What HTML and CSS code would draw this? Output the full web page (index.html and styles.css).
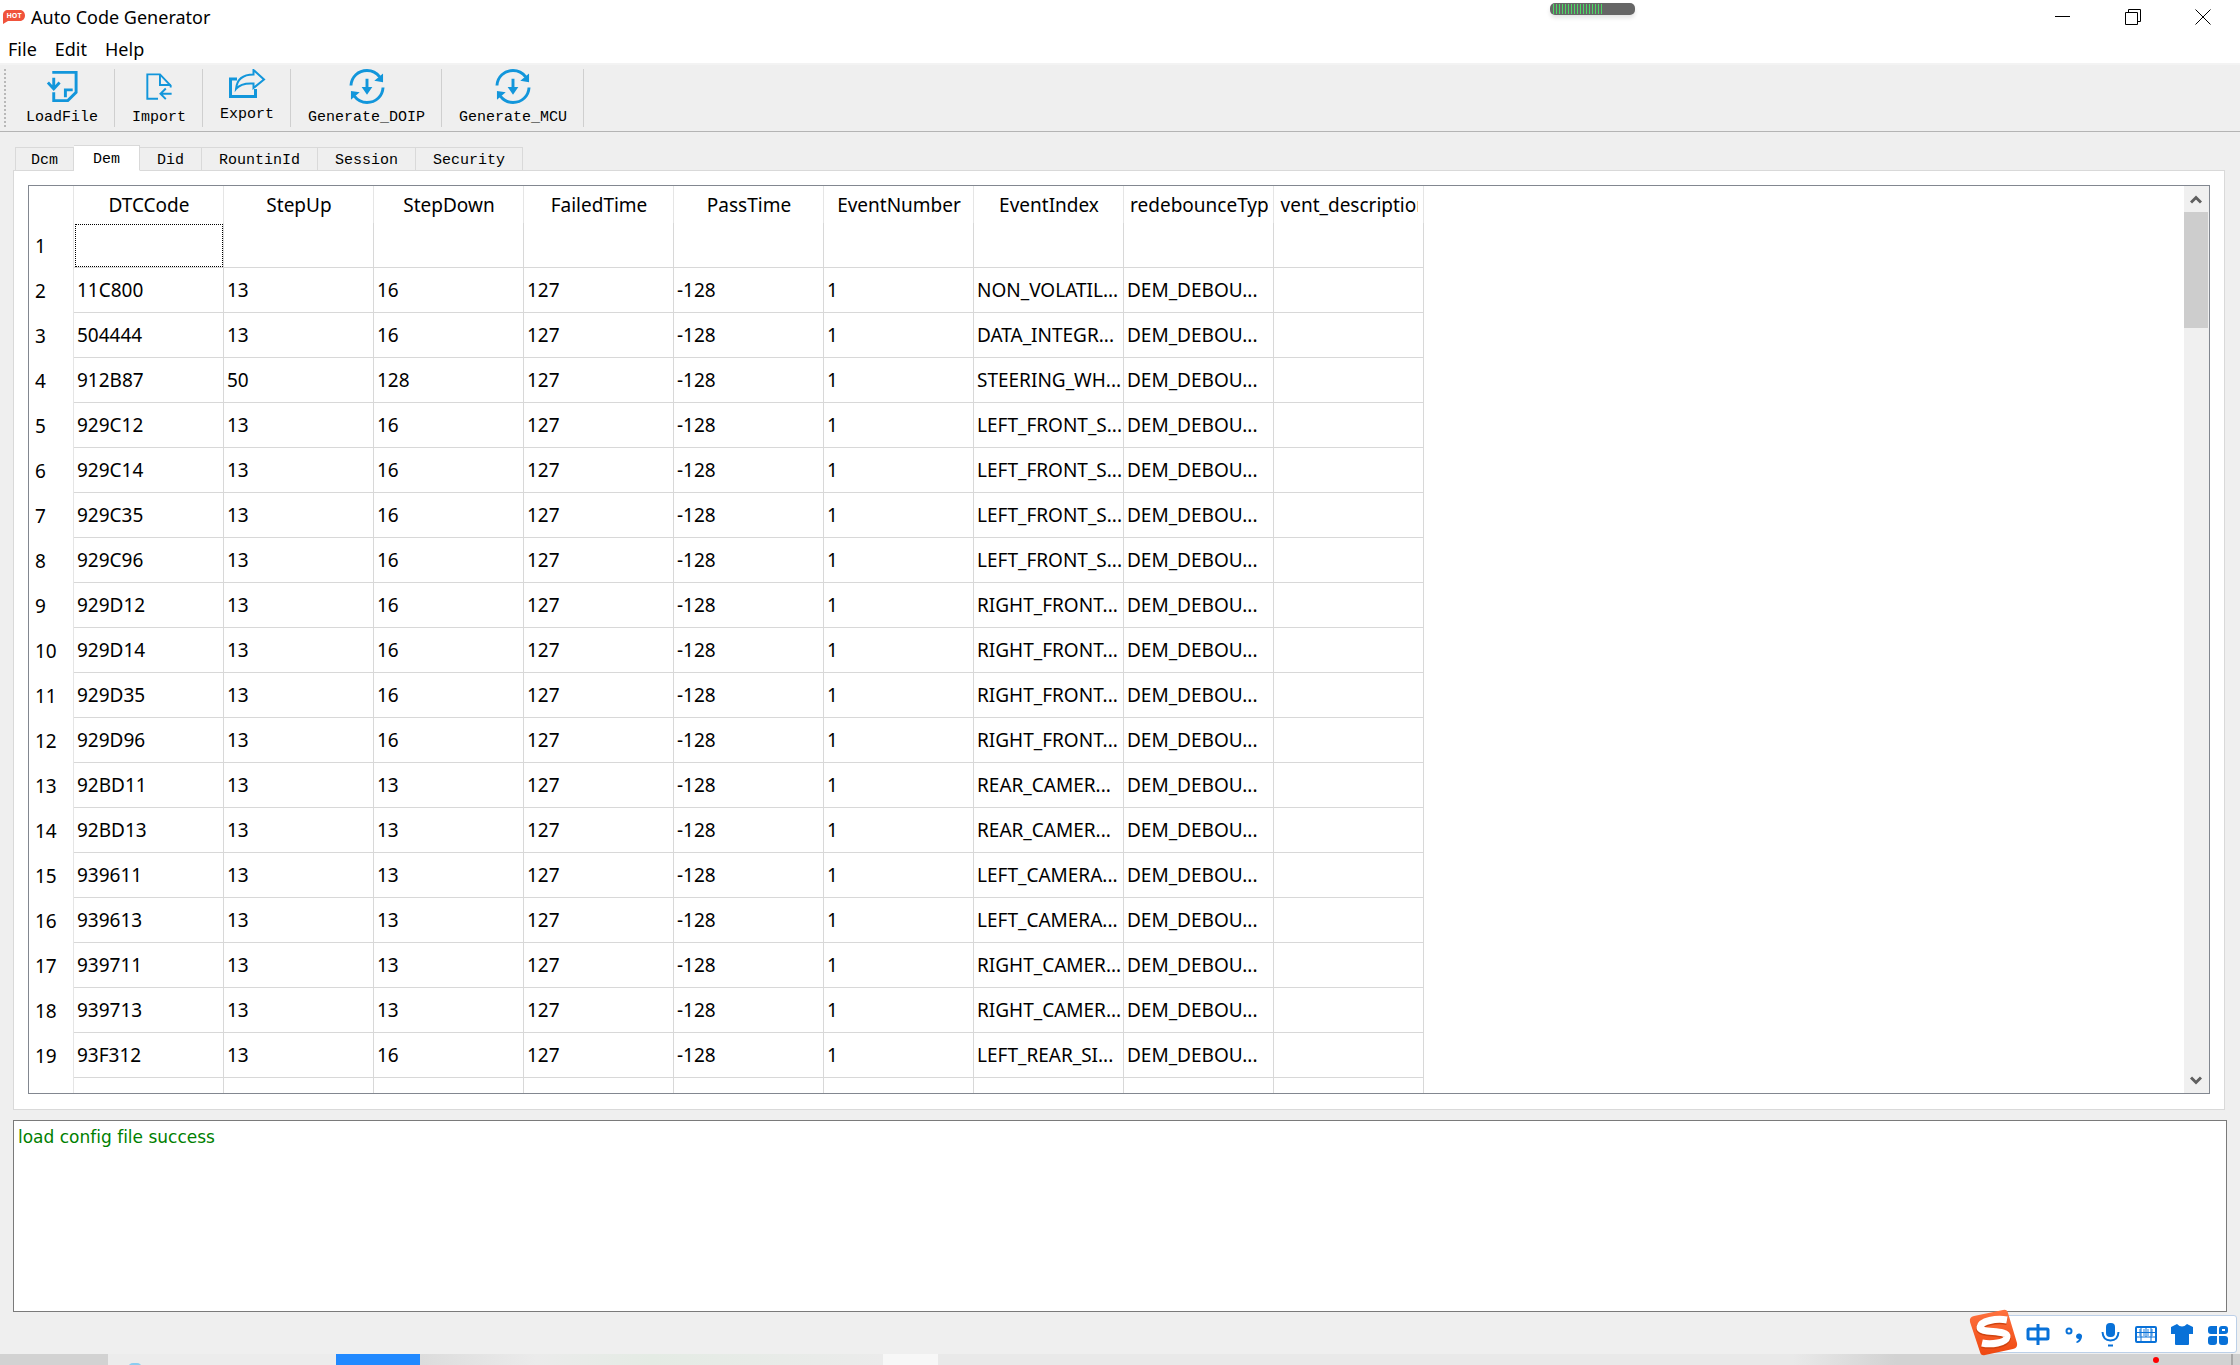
FILE: index.html
```html
<!DOCTYPE html>
<html lang="en">
<head>
<meta charset="utf-8">
<title>Auto Code Generator</title>
<link rel="stylesheet" href="styles.css">
</head>
<body>
<svg class="defs" width="0" height="0" aria-hidden="true">
  <symbol id="sync" viewBox="0 0 36 36">
    <path d="M1.500 17C2 8 9 1.500 18 1.500C24 1.500 28 4 31 8M34.500 19C34 28 27 34.500 18 34.500C12 34.500 8 32 5 28" fill="none" stroke="#1296db" stroke-width="3"/>
    <path d="M34.500 4.500V13.500L25.500 12ZM1.500 31.500V22.500L10.500 24ZM12.500 18.500H23.500L18 26.500ZM16.500 10h3v10h-3Z" fill="#1296db"/>
  </symbol>
</svg>

<header class="titlebar">
  <svg class="app-icon" width="22" height="16" viewBox="0 0 22 16"><path d="M5 1H17C20 1 22 3.500 22 6.500S20 12 17 12H5L0 15V6C0 3 2 1 5 1Z" fill="#f0533c"/><text x="11" y="9" text-anchor="middle" class="hot">HOT</text></svg>
  <h1 class="title">Auto Code Generator</h1>
  <div class="window-buttons">
    <button class="window-button" aria-label="Minimize"><svg width="16" height="16" viewBox="0 0 16 16"><path d="M0 7.500H15" stroke="#000"/></svg></button>
    <button class="window-button" aria-label="Restore"><svg width="16" height="16" viewBox="0 0 16 16"><path d="M.5 3.500H12.500V15.500H.5ZM3.500 3.500V.5H15.500V12.500H12.500" fill="none" stroke="#000"/></svg></button>
    <button class="window-button" aria-label="Close"><svg width="16" height="16" viewBox="0 0 16 16"><path d="M.5 .5L15.500 15.500M15.500 .5L.5 15.500" stroke="#000"/></svg></button>
  </div>
  <div class="meter"><div class="meter-bars"></div></div>
</header>

<nav class="menubar">
  <button class="menu">File</button>
  <button class="menu">Edit</button>
  <button class="menu">Help</button>
</nav>

<div class="toolbar" role="toolbar">
  <div class="grip"></div>
  <button class="tool tool-first">
    <svg width="36" height="36" viewBox="0 0 36 36"><g fill="none" stroke="#1296db" stroke-width="3"><path d="M8 3.500H32.500V24L24 32.500H9.500V24"/><path d="M21.500 29V21.500H29" /><path d="M9.500 9V20M3.500 14L9.500 20.500L15.500 14"/></g></svg>
    <span>LoadFile</span>
  </button>
  <button class="tool">
    <svg width="36" height="36" viewBox="0 0 36 36"><g fill="none" stroke="#1296db" stroke-width="2"><path d="M17 30.500H6V5.500H19L30 17V19"/><path d="M19 5.500V16.500H30"/><path d="M31 25.500H20M25 20L19.500 25.500L25 31"/></g></svg>
    <span>Import</span>
  </button>
  <button class="tool">
    <svg width="38" height="32" viewBox="0 4 38 32"><g fill="none" stroke="#1296db" stroke-width="2"><path d="M9 14H2.500V31.500H27.500V24" stroke-width="3"/><path d="M8 24C9 13 16 9.500 25.500 9.500V5L36 14.500L25.500 23V18.500C18 18 12 19 8 24Z"/></g></svg>
    <span>Export</span>
  </button>
  <button class="tool">
    <svg width="36" height="36"><use href="#sync"/></svg>
    <span>Generate_DOIP</span>
  </button>
  <button class="tool">
    <svg width="36" height="36"><use href="#sync"/></svg>
    <span>Generate_MCU</span>
  </button>
</div>

<main class="workspace">
  <div class="tabs" role="tablist">
    <button class="tab" role="tab">Dcm</button>
    <button class="tab tab-active" role="tab" aria-selected="true">Dem</button>
    <button class="tab" role="tab">Did</button>
    <button class="tab" role="tab">RountinId</button>
    <button class="tab" role="tab">Session</button>
    <button class="tab" role="tab">Security</button>
  </div>
  <section class="pane" role="tabpanel">
    <div class="grid-frame">
      <div class="grid-view">
        <table class="grid">
          <thead>
            <tr><th class="row-head"></th><th><div>DTCCode</div></th><th><div>StepUp</div></th><th><div>StepDown</div></th><th><div>FailedTime</div></th><th><div>PassTime</div></th><th><div>EventNumber</div></th><th><div>EventIndex</div></th><th><div>PredebounceType</div></th><th><div>Event_description</div></th></tr>
          </thead>
          <tbody>
            <tr><th>1</th><td class="focused"></td><td></td><td></td><td></td><td></td><td></td><td></td><td></td><td></td></tr>
            <tr><th>2</th><td>11C800</td><td>13</td><td>16</td><td>127</td><td>-128</td><td>1</td><td>NON_VOLATIL...</td><td>DEM_DEBOU...</td><td></td></tr>
            <tr><th>3</th><td>504444</td><td>13</td><td>16</td><td>127</td><td>-128</td><td>1</td><td>DATA_INTEGR...</td><td>DEM_DEBOU...</td><td></td></tr>
            <tr><th>4</th><td>912B87</td><td>50</td><td>128</td><td>127</td><td>-128</td><td>1</td><td>STEERING_WH...</td><td>DEM_DEBOU...</td><td></td></tr>
            <tr><th>5</th><td>929C12</td><td>13</td><td>16</td><td>127</td><td>-128</td><td>1</td><td>LEFT_FRONT_S...</td><td>DEM_DEBOU...</td><td></td></tr>
            <tr><th>6</th><td>929C14</td><td>13</td><td>16</td><td>127</td><td>-128</td><td>1</td><td>LEFT_FRONT_S...</td><td>DEM_DEBOU...</td><td></td></tr>
            <tr><th>7</th><td>929C35</td><td>13</td><td>16</td><td>127</td><td>-128</td><td>1</td><td>LEFT_FRONT_S...</td><td>DEM_DEBOU...</td><td></td></tr>
            <tr><th>8</th><td>929C96</td><td>13</td><td>16</td><td>127</td><td>-128</td><td>1</td><td>LEFT_FRONT_S...</td><td>DEM_DEBOU...</td><td></td></tr>
            <tr><th>9</th><td>929D12</td><td>13</td><td>16</td><td>127</td><td>-128</td><td>1</td><td>RIGHT_FRONT...</td><td>DEM_DEBOU...</td><td></td></tr>
            <tr><th>10</th><td>929D14</td><td>13</td><td>16</td><td>127</td><td>-128</td><td>1</td><td>RIGHT_FRONT...</td><td>DEM_DEBOU...</td><td></td></tr>
            <tr><th>11</th><td>929D35</td><td>13</td><td>16</td><td>127</td><td>-128</td><td>1</td><td>RIGHT_FRONT...</td><td>DEM_DEBOU...</td><td></td></tr>
            <tr><th>12</th><td>929D96</td><td>13</td><td>16</td><td>127</td><td>-128</td><td>1</td><td>RIGHT_FRONT...</td><td>DEM_DEBOU...</td><td></td></tr>
            <tr><th>13</th><td>92BD11</td><td>13</td><td>13</td><td>127</td><td>-128</td><td>1</td><td>REAR_CAMER...</td><td>DEM_DEBOU...</td><td></td></tr>
            <tr><th>14</th><td>92BD13</td><td>13</td><td>13</td><td>127</td><td>-128</td><td>1</td><td>REAR_CAMER...</td><td>DEM_DEBOU...</td><td></td></tr>
            <tr><th>15</th><td>939611</td><td>13</td><td>13</td><td>127</td><td>-128</td><td>1</td><td>LEFT_CAMERA...</td><td>DEM_DEBOU...</td><td></td></tr>
            <tr><th>16</th><td>939613</td><td>13</td><td>13</td><td>127</td><td>-128</td><td>1</td><td>LEFT_CAMERA...</td><td>DEM_DEBOU...</td><td></td></tr>
            <tr><th>17</th><td>939711</td><td>13</td><td>13</td><td>127</td><td>-128</td><td>1</td><td>RIGHT_CAMER...</td><td>DEM_DEBOU...</td><td></td></tr>
            <tr><th>18</th><td>939713</td><td>13</td><td>13</td><td>127</td><td>-128</td><td>1</td><td>RIGHT_CAMER...</td><td>DEM_DEBOU...</td><td></td></tr>
            <tr><th>19</th><td>93F312</td><td>13</td><td>16</td><td>127</td><td>-128</td><td>1</td><td>LEFT_REAR_SI...</td><td>DEM_DEBOU...</td><td></td></tr>
            <tr><th></th><td></td><td></td><td></td><td></td><td></td><td></td><td></td><td></td><td></td></tr>
          </tbody>
        </table>
      </div>
      <div class="scrollbar">
        <button class="scroll-arrow" aria-label="Scroll up"><svg width="12" height="10" viewBox="0 0 12 10"><path d="M1 8.500L6 3.500L11 8.500" fill="none" stroke="#606060" stroke-width="3"/></svg></button>
        <div class="scroll-thumb"></div>
        <button class="scroll-arrow scroll-down" aria-label="Scroll down"><svg width="12" height="10" viewBox="0 0 12 10"><path d="M1 2.500L6 7.500L11 2.500" fill="none" stroke="#606060" stroke-width="3"/></svg></button>
      </div>
    </div>
  </section>
</main>

<textarea class="log" aria-label="Log" readonly>load config file success</textarea>

<footer class="taskbar">
  <div class="task task-start"></div>
  <div class="task task-search"><div class="search-icon"></div></div>
  <div class="task task-blue"></div>
  <div class="task task-apps"></div>
  <div class="task task-light"></div>
  <div class="task task-rest"></div>
  <div class="notice-dot"></div>
</footer>

<aside class="ime">
  <svg class="ime-logo" width="50" height="48" viewBox="0 0 50 48">
    <defs><linearGradient id="orange" x1="0" y1="0" x2="0" y2="1"><stop offset="0" stop-color="#ff7340"/><stop offset="1" stop-color="#ee4710"/></linearGradient></defs>
    <path d="M5 7L34 1Q38 0 39 4L48 34Q49 39 44 40L16 46Q12 47 11 43L1 13Q0 8 5 7Z" fill="url(#orange)"/>
    <path d="M38 12C27 10 12 13 11 19C10 26 39 21 38 29C37 35 22 37 13 35" fill="none" stroke="#d0430f" stroke-width="8"/>
    <path d="M38 11C27 9 12 12 11 18C10 25 39 20 38 28C37 34 22 36 13 34" fill="none" stroke="#fff" stroke-width="7"/>
  </svg>
  <button class="ime-button" aria-label="Chinese mode"><svg width="24" height="26" viewBox="0 0 24 26"><path d="M3 7H21Q22 7 22 8V16Q22 17 21 17H3Q2 17 2 16V8Q2 7 3 7ZM12 2V23" fill="none" stroke="#0871d8" stroke-width="3"/></svg></button>
  <button class="ime-button" aria-label="Punctuation"><svg width="24" height="26" viewBox="0 0 24 26"><circle cx="7" cy="9" r="2.500" fill="none" stroke="#0871d8" stroke-width="2"/><path d="M14 14A3 3 0 1 1 20 15Q19 20 15 21L14 20Q17 18 17 17Q14 17 14 14Z" fill="#0871d8"/></svg></button>
  <button class="ime-button" aria-label="Voice input"><svg width="24" height="26" viewBox="0 0 24 26"><rect x="8" y="1" width="9" height="14" rx="4" fill="#0871d8"/><path d="M4.500 10Q5 18.500 12.500 18.500T20.500 10M10 23.500H15" fill="none" stroke="#0871d8" stroke-width="2"/></svg></button>
  <button class="ime-button" aria-label="Keyboard"><svg width="24" height="26" viewBox="0 0 24 26"><rect x="2" y="5" width="20" height="15" rx="1" fill="none" stroke="#0871d8" stroke-width="2"/><path d="M5 8.500H20M5 12.500H20" stroke="#0871d8" stroke-width="3" stroke-dasharray="2 2" opacity=".45"/><path d="M3 10.500H21M3 15H21M7 5V20M12 5V15M17 5V20" stroke="#0871d8"/></svg></button>
  <button class="ime-button" aria-label="Skins"><svg width="24" height="26" viewBox="0 0 24 26"><path d="M7 2Q12 7 17 2L23 5V12H19V22Q19 23 18 23H6Q5 23 5 22V12H1V5Z" fill="#0871d8"/></svg></button>
  <button class="ime-button" aria-label="Toolbox"><svg width="24" height="26" viewBox="0 0 24 26"><path d="M5 4H11V12H5Q2 12 2 9V7Q2 4 5 4ZM5 14H11V20Q11 23 8 23H5Q2 23 2 20V17Q2 14 5 14ZM13 14H19Q22 14 22 17V20Q22 23 19 23H16Q13 23 13 20Z" fill="#0871d8"/><path d="M14.500 10.500V7Q14.500 5.500 16 5.500H19Q20.500 5.500 20.500 7V9Q20.500 10.500 19 10.500Z" fill="none" stroke="#0871d8" stroke-width="3"/></svg></button>
</aside>
</body>
</html>
```

FILE: styles.css
```css
* { box-sizing: border-box; }

body {
  margin: 0;
  height: 100vh;
  overflow: hidden;
  display: flex;
  flex-direction: column;
  background: #efefef;
  color: #000;
  font-family: "Noto Sans", "Open Sans", sans-serif;
  font-size: 19px;
}

button {
  margin: 0;
  padding: 0;
  border: 0;
  background: none;
  color: inherit;
  font: inherit;
}

svg { display: block; }
.defs { position: absolute; }

/* Title bar and menus */
.titlebar {
  flex: none;
  display: flex;
  align-items: center;
  height: 34px;
  padding: 0 2px 0 3px;
  background: #fff;
}
.hot { font: bold 7px "Open Sans", sans-serif; fill: #fff; }
.title { flex: 1; margin: 0 0 0 6px; font-size: 18px; font-weight: 400; }
.window-buttons { display: flex; }
.window-button { width: 70px; height: 33px; display: grid; place-items: center; }
.meter {
  position: absolute;
  top: 3px;
  left: 1550px;
  width: 85px;
  height: 12px;
  padding: 1px 3px;
  border-radius: 5px;
  background: #666;
  box-shadow: 0 3px 4px #e4e4e4;
}
.meter-bars {
  width: 49px;
  height: 10px;
  background: repeating-linear-gradient(90deg, #4bd964 0 1px, #666 1px 3px);
}

.menubar {
  flex: none;
  display: flex;
  gap: 18px;
  height: 31px;
  padding-left: 8px;
  background: #fff;
  border-bottom: 2px solid #f3f3f3;
}
.menu { font-size: 18px; line-height: 30px; }

/* Toolbar */
.toolbar {
  flex: none;
  display: flex;
  height: 67px;
  padding: 4px 0 4px 4px;
  border-bottom: 1px solid #b4b4b4;
  font-family: "Liberation Mono", monospace;
  font-size: 15px;
}
.grip {
  width: 2px;
  background: repeating-linear-gradient(#b8b8b8 0 2px, #efefef 2px 4px);
}
.tool {
  display: flex;
  flex-direction: column;
  align-items: center;
  gap: 5px;
  padding: 0 16px 0 17px;
  border-right: 1px solid #cfcfcf;
  line-height: 18px;
}
.tool-first { padding-left: 20px; }

/* Tabs and pane */
.workspace {
  flex: 1;
  min-height: 0;
  display: flex;
  flex-direction: column;
  padding: 13px 15px 10px 13px;
}
.tabs {
  display: flex;
  align-items: flex-end;
  height: 26px;
  padding-left: 2px;
  margin-bottom: -1px;
  z-index: 1;
  font-family: "Liberation Mono", monospace;
  font-size: 15px;
}
.tab {
  height: 24px;
  padding: 3px 17px 0;
  border: 1px solid #d9d9d9;
  border-left: 0;
  line-height: 19px;
}
.tab:first-child { padding: 3px 15px 0; border-left: 1px solid #d9d9d9; }
.tab-active {
  height: 26px;
  padding: 2px 19px 0;
  background: #fff;
  border-bottom-color: #fff;
}
.pane {
  flex: 1;
  min-height: 0;
  display: flex;
  padding: 14px 14px 15px;
  background: #fff;
  border: 1px solid #d9d9d9;
}
.grid-frame {
  flex: 1;
  min-width: 0;
  display: flex;
  border: 1px solid #828790;
}
.grid-view { flex: 1; min-width: 0; overflow: hidden; }

/* Data grid */
.grid {
  width: 1395px;
  table-layout: fixed;
  border-spacing: 0;
}
.grid th, .grid td {
  height: 45px;
  padding: 0 0 0 3px;
  border: solid #d8d8d8;
  border-width: 0 1px 1px 0;
  font-weight: 400;
  text-align: left;
  white-space: nowrap;
}
.grid thead th {
  height: 37px;
  padding: 0 5px 0 6px;
  border-color: #e5e5e5;
  border-bottom: 0;
}
.grid thead div {
  display: flex;
  justify-content: center;
  overflow: hidden;
}
.grid .row-head { width: 45px; }
.grid tbody th { padding: 1px 0 0 6px; border-bottom: 0; border-color: #e5e5e5; }
.grid .focused { outline: 1px dotted #000; outline-offset: -2px; }

.scrollbar {
  display: flex;
  flex-direction: column;
  width: 25px;
  padding-right: 1px;
  background: #f0f0f0;
}
.scroll-arrow { height: 26px; display: grid; place-items: center; }
.scroll-thumb { height: 116px; background: #cdcdcd; }
.scroll-down { margin-top: auto; }

/* Log output */
.log {
  flex: none;
  height: 192px;
  margin: 0 13px 42px;
  padding: 3px 4px;
  border: 1px solid #7a7a7a;
  outline: 0;
  resize: none;
  background: #fff;
  color: #008000;
  font: 17px/26px "DejaVu Sans", sans-serif;
  font-variant-ligatures: none;
}

/* Strip of the desktop taskbar */
.taskbar {
  flex: none;
  position: relative;
  display: flex;
  height: 11px;
  overflow: hidden;
}
.task-start { width: 108px; background: #d2d2d2; }
.task-search { width: 228px; padding: 9px 0 0 20px; background: #ececec; }
.search-icon { width: 14px; height: 10px; border-radius: 5px; background: #8ccdf0; }
.task-blue { width: 84px; background: #2189ff; }
.task-apps { width: 463px; background: linear-gradient(90deg, #dcdcdc, #ebebeb 25%, #e4ebe4 50%, #ebebeb); }
.task-light { width: 55px; background: #f7f7f7; }
.task-rest { flex: 1; background: linear-gradient(90deg, #e9e9e9 66%, #d2d2d2 74%); border-right: 7px solid #cfcfcf; box-shadow: inset -2px 0 #a8a8a8; }
.notice-dot {
  position: absolute;
  right: 81px;
  top: 3px;
  width: 6px;
  height: 6px;
  border-radius: 3px;
  background: #f00;
}

/* Floating input method bar */
.ime {
  position: absolute;
  right: 3px;
  bottom: 12px;
  display: flex;
  align-items: center;
  gap: 12px;
  height: 38px;
  padding: 1px 6px 0 36px;
  background: #fff;
  border: 1px solid #bcd0e8;
  border-radius: 3px;
}
.ime-logo { position: absolute; left: -21px; top: -7px; }
```
